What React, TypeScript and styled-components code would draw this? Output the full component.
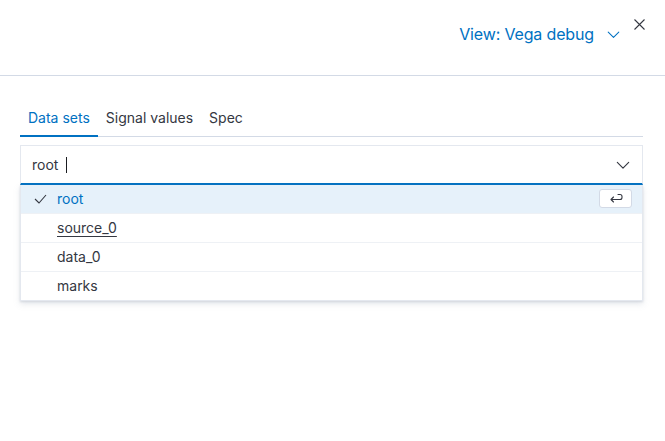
import React from "react";
import styled, { createGlobalStyle } from "styled-components";

const Global = createGlobalStyle`
  html, body { margin: 0; padding: 0; background: #fff; }
  body { font-family: Inter, "Noto Sans", sans-serif; color: #343741; }
  * { box-sizing: border-box; }
`;

const Page = styled.div`
  width: 665px;
  height: 441px;
  background: #fff;
  display: flex;
  flex-direction: column;
`;

const Header = styled.div`
  height: 76px;
  border-bottom: 1px solid #d3dae6;
  display: flex;
  align-items: flex-start;
  justify-content: flex-end;
  padding: 0 19px 0 0;
`;

const ViewButton = styled.button`
  margin-top: 24px;
  border: none;
  background: none;
  padding: 0;
  font-family: Inter, "Noto Sans", sans-serif;
  font-size: 16px;
  letter-spacing: -0.15px;
  color: #0071c2;
  display: flex;
  align-items: center;
  gap: 13px;
  height: 20px;
  cursor: pointer;
`;

const CloseButton = styled.button`
  margin-top: 17px;
  margin-left: 12px;
  border: none;
  background: none;
  padding: 0;
  width: 14px;
  height: 14px;
  display: flex;
  align-items: center;
  justify-content: center;
  color: #343741;
`;

const Body = styled.div`
  padding: 24px 22px 0 20px;
  display: flex;
  flex-direction: column;
`;

const Tabs = styled.div`
  display: flex;
  border-bottom: 1px solid #d3dae6;
  height: 37px;
`;

const Tab = styled.div<{ $active?: boolean }>`
  padding: 0 8px;
  font-size: 14px;
  line-height: 36px;
  color: ${(p) => (p.$active ? "#0071c2" : "#343741")};
  box-shadow: ${(p) => (p.$active ? "inset 0 -2px 0 #0071c2" : "none")};
  height: 37px;
  margin-bottom: -1px;
`;

const Combo = styled.div`
  margin-top: 8px;
  display: flex;
  flex-direction: column;
`;

const Input = styled.div`
  height: 40px;
  border: 1px solid #e4e8ef;
  border-bottom: 2px solid #0071c2;
  display: flex;
  align-items: center;
  padding: 0 12px 0 11px;
  font-size: 14px;
  color: #343741;
`;

const Caret = styled.span`
  display: inline-block;
  width: 1px;
  height: 16px;
  background: #1a1c21;
  margin-left: 8px;
`;

const Grow = styled.div`
  flex: 1;
  display: flex;
  align-items: center;
`;

const List = styled.div`
  background: #fff;
  border: 1px solid #e4e8ef;
  border-top: none;
  box-shadow: 0 3px 6px rgba(152, 162, 179, 0.25), 0 1px 2px rgba(152, 162, 179, 0.3);
  display: flex;
  flex-direction: column;
`;

const Row = styled.div<{ $selected?: boolean; $last?: boolean }>`
  height: ${(p) => (p.$last ? "28px" : "29px")};
  display: flex;
  align-items: center;
  padding: 0 10px 1px 13px;
  background: ${(p) => (p.$selected ? "#e6f1fa" : "#fff")};
  border-bottom: ${(p) => (p.$last ? "none" : "1px solid #eef1f5")};
  font-size: 14px;
  color: ${(p) => (p.$selected ? "#0071c2" : "#343741")};
`;

const CheckSlot = styled.span`
  width: 23px;
  display: flex;
  align-items: center;
`;

const Label = styled.span<{ $underline?: boolean }>`
  flex: 1;
  text-decoration: ${(p) => (p.$underline ? "underline" : "none")};
  text-underline-offset: 3px;
`;

const KeyBadge = styled.span`
  width: 33px;
  height: 19px;
  border: 1px solid #d3dae6;
  border-radius: 3px;
  background: #fff;
  display: flex;
  align-items: center;
  justify-content: center;
`;

const Chevron = ({ color, size = 12 }: { color: string; size?: number }) => (
  <svg width={size} height={size} viewBox="0 0 16 16" fill="none">
    <path d="M1.5 5l6.5 6.5L14.5 5" stroke={color} strokeWidth="1.3" strokeLinecap="round" strokeLinejoin="round" />
  </svg>
);

export default function App() {
  const rows = [
    { name: "root", selected: true },
    { name: "source_0", underline: true },
    { name: "data_0" },
    { name: "marks" },
  ];
  return (
    <Page>
      <Global />
      <Header>
        <ViewButton>
          <span>View: Vega debug</span>
          <Chevron color="#0071c2" size={13} />
        </ViewButton>
        <CloseButton aria-label="close">
          <svg width="11" height="11" viewBox="0 0 11 11">
            <path d="M0.5 0.5l10 10M10.5 0.5l-10 10" stroke="#343741" strokeWidth="1.1" />
          </svg>
        </CloseButton>
      </Header>
      <Body>
        <Tabs>
          <Tab $active>Data sets</Tab>
          <Tab>Signal values</Tab>
          <Tab>Spec</Tab>
        </Tabs>
        <Combo>
          <Input>
            <Grow>
              root<Caret />
            </Grow>
            <Chevron color="#343741" size={14} />
          </Input>
          <List>
            {rows.map((r, i) => (
              <Row key={r.name} $selected={r.selected} $last={i === rows.length - 1}>
                <CheckSlot>
                  {r.selected && (
                    <svg width="13" height="10" viewBox="0 0 13 10" fill="none">
                      <path d="M1 5l4 4 7-8" stroke="#343741" strokeWidth="1.1" />
                    </svg>
                  )}
                </CheckSlot>
                <Label $underline={r.underline}>{r.name}</Label>
                {r.selected && (
                  <KeyBadge>
                    <svg width="14" height="11" viewBox="0 0 14 11" fill="none">
                      <path d="M9 1.5h2a2 2 0 0 1 2 2v1a2 2 0 0 1-2 2H2M4.5 4L2 6.5 4.5 9" stroke="#343741" strokeWidth="1.1" strokeLinecap="round" strokeLinejoin="round" />
                    </svg>
                  </KeyBadge>
                )}
              </Row>
            ))}
          </List>
        </Combo>
      </Body>
    </Page>
  );
}
